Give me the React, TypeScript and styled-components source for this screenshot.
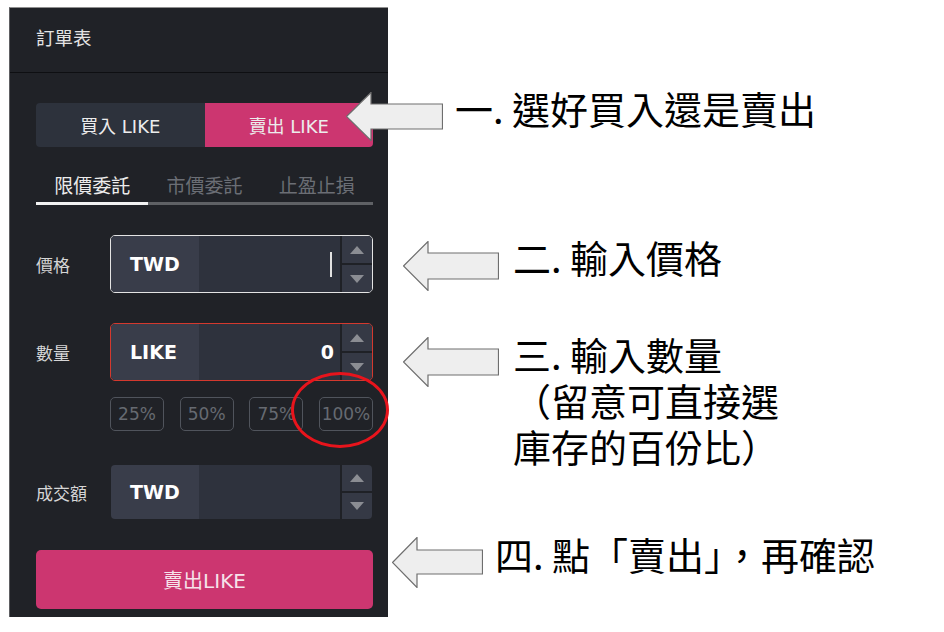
import React from 'react';
import styled, { createGlobalStyle } from 'styled-components';

const GlobalStyle = createGlobalStyle`
    body {
        margin: 0;
        background: #ffffff;
        font-family: "DejaVu Sans", "Noto Sans CJK TC", sans-serif;
    }
    * { box-sizing: border-box; }
`

const Page = styled.div`
    display: flex;
    align-items: flex-start;
    width: 944px;
    height: 632px;
    overflow: hidden;
`

const Panel = styled.div`
    width: 379px;
    margin: 7px 0 0 9px;
    background: #202227;
    border-top: 1px solid #8f8f8f;
    border-left: 1px solid #5e5f62;
`

const Header = styled.div`
    height: 65px;
    padding: 0 0 6px 26px;
    display: flex;
    align-items: center;
    border-bottom: 1px solid #0e0f12;
    color: #e4e4e4;
    font-size: 18.5px;
`

const Body = styled.div`
    display: flex;
    flex-direction: column;
    padding: 30px 15px 8px 26px;
`

const SideToggle = styled.div`
    display: grid;
    grid-template-columns: 1fr 1fr;
    height: 44px;
    border-radius: 4px;
    overflow: hidden;
`

const SideButton = styled.div<{ $active?: boolean }>`
    display: flex;
    align-items: center;
    justify-content: center;
    background: ${p => p.$active ? '#cc3670' : '#2d323c'};
    color: #ececec;
    font-size: 18px;
`

const Tabs = styled.div`
    display: grid;
    grid-template-columns: repeat(3, 1fr);
    margin-top: 18px;
`

const Tab = styled.div<{ $active?: boolean }>`
    height: 40px;
    padding-top: 2px;
    display: flex;
    align-items: center;
    justify-content: center;
    font-size: 19px;
    color: ${p => p.$active ? '#ececec' : '#6b6e75'};
    border-bottom: 3px solid ${p => p.$active ? '#f2f2f2' : '#5f6165'};
`

const FieldRow = styled.div<{ $gap: number }>`
    display: flex;
    align-items: center;
    margin-top: ${p => p.$gap}px;
`

const Label = styled.div`
    width: 74px;
    color: #d6d6d6;
    font-size: 17px;
`

const InputBox = styled.div<{ $border: string; $height: number }>`
    flex: 1;
    display: flex;
    height: ${p => p.$height}px;
    border: 1px solid ${p => p.$border};
    border-radius: 5px;
    overflow: hidden;
`

const Currency = styled.div`
    width: 88px;
    padding-left: 19px;
    display: flex;
    align-items: center;
    background: #393d4a;
    color: #ffffff;
    font-weight: 700;
    font-size: 19px;
`

const Value = styled.div`
    flex: 1;
    display: flex;
    align-items: center;
    justify-content: flex-end;
    padding-right: 6px;
    background: #2e323d;
    color: #ffffff;
    font-weight: 700;
    font-size: 19px;
`

const Caret = styled.span`
    display: block;
    width: 2px;
    height: 25px;
    margin-right: 2px;
    background: #e2e2e2;
`

const Spinner = styled.div`
    width: 32px;
    display: flex;
    flex-direction: column;
    border-left: 2px solid #1f2126;
`

const SpinButton = styled.div<{ $down?: boolean }>`
    flex: 1;
    display: flex;
    align-items: center;
    justify-content: center;
    background: #353945;
    border-top: ${p => p.$down ? '2px solid #1f2126' : 'none'};
`

const Triangle = styled.span<{ $down?: boolean }>`
    width: 0;
    height: 0;
    border-left: 7px solid transparent;
    border-right: 7px solid transparent;
    ${p => p.$down ? 'border-top: 8px solid #8b8d93;' : 'border-bottom: 8px solid #8b8d93;'}
`

const PercentRow = styled.div`
    position: relative;
    display: flex;
    justify-content: space-between;
    margin: 16px 0 0 74px;
`

const PercentButton = styled.div`
    width: 54px;
    height: 34px;
    display: flex;
    align-items: center;
    justify-content: center;
    border: 1.5px solid #50545c;
    border-radius: 5px;
    color: #666a71;
    font-size: 17px;
    white-space: nowrap;
`

const Highlight = styled.div`
    position: absolute;
    left: 181px;
    top: -25px;
    width: 98px;
    height: 76px;
    border: 3px solid #e8141c;
    border-radius: 50%;
    pointer-events: none;
`

const SubmitButton = styled.div`
    height: 59px;
    margin-top: 30px;
    display: flex;
    align-items: center;
    justify-content: center;
    background: #cc3670;
    border-radius: 5px;
    color: #f6e2ea;
    font-size: 20px;
`

const Notes = styled.div`
    display: flex;
    flex-direction: column;
`

const Note = styled.div<{ $top: number; $indent: number; $gap: number }>`
    display: flex;
    align-items: flex-start;
    gap: ${p => p.$gap}px;
    margin-top: ${p => p.$top}px;
    margin-left: ${p => p.$indent}px;
`

const NoteText = styled.div<{ $dy: number }>`
    margin-top: ${p => p.$dy}px;
    color: #000000;
    font-family: "Noto Sans CJK TC", sans-serif;
    font-size: 38px;
    line-height: 46px;
    white-space: nowrap;
`

const NoteLine = styled.div`
    height: 46px;
`

const Arrow = ({ w, h, bodyTop, bodyBottom }: { w: number; h: number; bodyTop: number; bodyBottom: number }) => {
    const head = 25;
    const pts = [
        [0.5, h / 2],
        [head, 0.5],
        [head, bodyTop],
        [w - 0.5, bodyTop],
        [w - 0.5, bodyBottom],
        [head, bodyBottom],
        [head, h - 0.5],
    ].map(p => p.join(',')).join(' ');
    return (
        <svg width={w} height={h} style={{ flexShrink: 0, display: 'block' }}>
            <polygon points={pts} fill="#eeeeee" stroke="#6e6e6e" strokeWidth="1.2" />
        </svg>
    );
};

const Field = ({ label, currency, value, border, height, gap, caret }: {
    label: string; currency: string; value?: string; border: string; height: number; gap: number; caret?: boolean
}) => (
    <FieldRow $gap={gap}>
        <Label>{label}</Label>
        <InputBox $border={border} $height={height}>
            <Currency>{currency}</Currency>
            <Value>
                {caret && <Caret />}
                {value}
            </Value>
            <Spinner>
                <SpinButton><Triangle /></SpinButton>
                <SpinButton $down><Triangle $down /></SpinButton>
            </Spinner>
        </InputBox>
    </FieldRow>
);

const App = () => {
    return (
        <>
            <GlobalStyle />
            <Page>
                <Panel>
                    <Header>訂單表</Header>
                    <Body>
                        <SideToggle>
                            <SideButton>買入 LIKE</SideButton>
                            <SideButton $active>賣出 LIKE</SideButton>
                        </SideToggle>
                        <Tabs>
                            <Tab $active>限價委託</Tab>
                            <Tab>市價委託</Tab>
                            <Tab>止盈止損</Tab>
                        </Tabs>
                        <Field label="價格" currency="TWD" border="#e4e4e4" height={58} gap={30} caret />
                        <Field label="數量" currency="LIKE" value="0" border="#d4392e" height={58} gap={30} />
                        <PercentRow>
                            <PercentButton>25%</PercentButton>
                            <PercentButton>50%</PercentButton>
                            <PercentButton>75%</PercentButton>
                            <PercentButton>100%</PercentButton>
                            <Highlight />
                        </PercentRow>
                        <Field label="成交額" currency="TWD" border="transparent" height={56} gap={33} />
                        <SubmitButton>賣出LIKE</SubmitButton>
                    </Body>
                </Panel>
                <Notes>
                    <Note $top={92} $indent={-42} $gap={12}>
                        <Arrow w={97} h={49} bodyTop={12} bodyBottom={37} />
                        <NoteText $dy={-7}>一. 選好買入還是賣出</NoteText>
                    </Note>
                    <Note $top={100} $indent={15} $gap={14}>
                        <Arrow w={96} h={50} bodyTop={12} bodyBottom={38} />
                        <NoteText $dy={-7}>二. 輸入價格</NoteText>
                    </Note>
                    <Note $top={46} $indent={15} $gap={14}>
                        <Arrow w={96} h={50} bodyTop={12} bodyBottom={38} />
                        <NoteText $dy={-6}>
                            <NoteLine>三. 輸入數量</NoteLine>
                            <NoteLine>（留意可直接選</NoteLine>
                            <NoteLine>庫存的百份比）</NoteLine>
                        </NoteText>
                    </Note>
                    <Note $top={68} $indent={4} $gap={12}>
                        <Arrow w={91} h={51} bodyTop={13} bodyBottom={37} />
                        <NoteText $dy={-6}>四. 點「賣出」，再確認</NoteText>
                    </Note>
                </Notes>
            </Page>
        </>
    );
};

export default App;
